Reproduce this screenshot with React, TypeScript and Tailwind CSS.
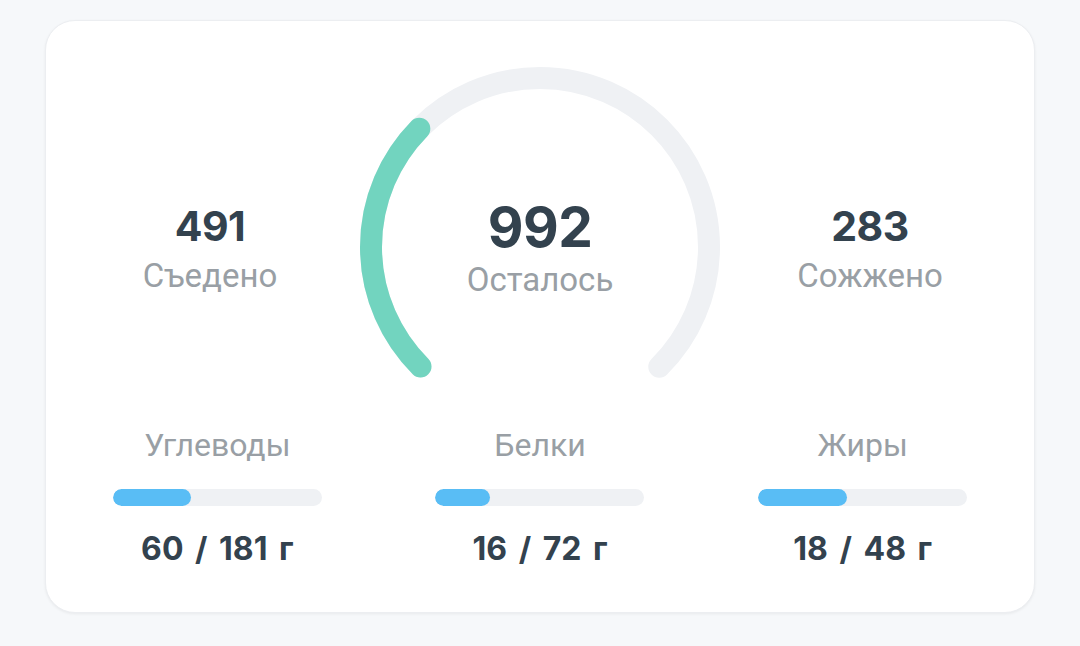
import React from 'react';

const numFont = { fontFamily: 'Inter, "Open Sans", sans-serif' };
const labelFont = { fontFamily: 'Roboto, "Noto Sans", sans-serif' };

interface Macro {
  name: string;
  eaten: number;
  goal: number;
  fill: number; // px width of the filled part
}

const macros: Macro[] = [
  { name: 'Углеводы', eaten: 60, goal: 181, fill: 78 },
  { name: 'Белки', eaten: 16, goal: 72, fill: 55 },
  { name: 'Жиры', eaten: 18, goal: 48, fill: 89 },
];

// 270° ring, opening at the bottom
function Gauge({ progress }: { progress: number }) {
  const cx = 180;
  const cy = 180;
  const r = 169;
  const len = 2 * Math.PI * r;
  const arc = len * 0.75;
  return (
    <svg width="360" height="322" viewBox="0 0 360 322" className="block">
      <circle
        cx={cx}
        cy={cy}
        r={r}
        fill="none"
        stroke="#eff1f4"
        strokeWidth="22"
        strokeLinecap="round"
        strokeDasharray={`${arc} ${len}`}
        transform={`rotate(135 ${cx} ${cy})`}
      />
      <circle
        cx={cx}
        cy={cy}
        r={r}
        fill="none"
        stroke="#72d4bf"
        strokeWidth="22"
        strokeLinecap="round"
        strokeDasharray={`${arc * progress} ${len}`}
        transform={`rotate(135 ${cx} ${cy})`}
      />
    </svg>
  );
}

function Stat({ value, label }: { value: number; label: string }) {
  return (
    <div className="flex flex-col items-center pt-[135px]">
      <div style={numFont} className="text-[41px] leading-[48px] font-bold text-[#33424e] tracking-[-0.5px]">
        {value}
      </div>
      <div style={labelFont} className="text-[33px] leading-[40px] text-[#999fa5] mt-[6px]">
        {label}
      </div>
    </div>
  );
}

export default function App() {
  const eaten = 491;
  const left = 992;
  const burned = 283;

  return (
    <div className="min-h-screen bg-[#f6f8fa] pt-[20px] pl-[45px]">
      <div className="w-[990px] h-[593px] rounded-[30px] bg-white border border-[#eceef1] shadow-[0_1px_3px_rgba(0,0,0,0.06)] flex flex-col">
        <div className="grid grid-cols-[1fr_360px_1fr] gap-x-[10px] px-[24px] pt-[46px]">
          <Stat value={eaten} label="Съедено" />
          <div className="relative">
            <Gauge progress={eaten / (eaten + left)} />
            <div className="absolute inset-x-0 top-[129px] flex flex-col items-center">
              <div style={numFont} className="text-[55px] leading-[62px] font-bold text-[#33424e] tracking-[-0.5px]">
                {left}
              </div>
              <div style={labelFont} className="text-[33px] leading-[40px] text-[#999fa5] mt-[2px]">
                Осталось
              </div>
            </div>
          </div>
          <Stat value={burned} label="Сожжено" />
        </div>

        <div className="grid grid-cols-3 px-[10px] mt-[36px]">
          {macros.map((m) => (
            <div key={m.name} className="flex flex-col items-center">
              <div style={labelFont} className="text-[32px] leading-[40px] text-[#999fa5]">
                {m.name}
              </div>
              <div className="w-[209px] h-[17px] rounded-full bg-[#eff1f4] mt-[24px] overflow-hidden">
                <div className="h-full rounded-full bg-[#59bdf5]" style={{ width: m.fill }} />
              </div>
              <div style={numFont} className="text-[32px] leading-[36px] font-bold text-[#33424e] mt-[25px] whitespace-pre [word-spacing:4px]">
                {`${m.eaten} / ${m.goal} г`}
              </div>
            </div>
          ))}
        </div>
      </div>
    </div>
  );
}
